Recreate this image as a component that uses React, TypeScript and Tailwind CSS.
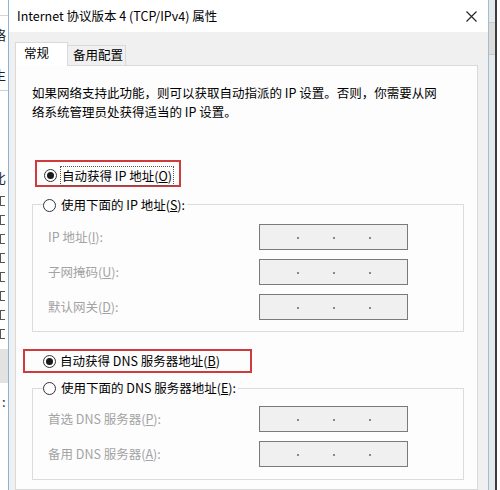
const font = "font-['Noto_Sans_CJK_SC','Noto_Sans',sans-serif]"

function Radio({ checked }: { checked?: boolean }) {
  return (
    <span className="flex h-[13px] w-[13px] shrink-0 items-center justify-center rounded-full border border-[#333] bg-white">
      {checked && <span className="h-[7px] w-[7px] rounded-full bg-[#1a1a1a]" />}
    </span>
  )
}

function IpBox() {
  return (
    <div className="flex h-[26px] w-[149px] items-center border border-[#7a7a7a] bg-[#f0f0f0] pl-[20px]">
      {[0, 1, 2].map((i) => (
        <span key={i} className="flex w-[36px] justify-center pt-[2px]">
          <span className="h-[2px] w-[2px] rounded-full bg-[#666]" />
        </span>
      ))}
    </div>
  )
}

function FieldRow({ label, hotkey }: { label: string; hotkey: string }) {
  return (
    <div className="flex h-[26px] items-center pl-[15px]">
      <span className="w-[211px] text-[#a3a3a3]">
        {label}(<span className="underline">{hotkey}</span>):
      </span>
      <IpBox />
    </div>
  )
}

function LeftWindow() {
  return (
    <div className="flex w-[8px] shrink-0 flex-col overflow-hidden bg-white text-[13px] text-[#222]">
      <div className="h-[16px] border-b border-[#d6d6d6]" />
      <div className="mt-[10px] -ml-[7px] leading-[18px]">络</div>
      <div className="mt-[22px] -ml-[7px] leading-[18px]">生</div>
      <div className="mt-[6px] h-px bg-[#cfcfcf]" />
      <div className="mt-[78px] -ml-[7px] leading-[18px]">比</div>
      {[0, 1, 2, 3, 4, 5, 6, 7].map((i) => (
        <div key={i} className="mt-[9px] h-[10px] w-[5px] border border-r-0 border-[#555]" />
      ))}
      <div className="mt-[10px] h-[34px] bg-[#e2e2e2]" />
      <div className="mt-[12px] pl-[2px] leading-[14px]">:</div>
    </div>
  )
}

export default function App() {
  return (
    <div className={`flex h-[490px] w-[500px] overflow-hidden bg-white text-black ${font}`}>
      <LeftWindow />

      <div className="flex w-[481px] shrink-0 flex-col border-x border-l-[#8fb3d6] border-r-[#a7bccb]">
        {/* title bar */}
        <div className="flex h-[32px] shrink-0 items-center justify-between bg-white pl-[8px] pr-[11px]">
          <span className="text-[12.5px] leading-none">Internet 协议版本 4 (TCP/IPv4) 属性</span>
          <svg width="11" height="11" viewBox="0 0 11 11" className="text-[#222]">
            <path d="M0.5 0.5 L10.5 10.5 M10.5 0.5 L0.5 10.5" stroke="currentColor" strokeWidth="1.1" />
          </svg>
        </div>

        {/* body */}
        <div className="flex flex-1 flex-col bg-[#f0f0f0] pl-[6px] pr-[10px] pt-[10px] text-[12.5px]">
          <div className="relative z-10 -mb-px flex h-[24px] items-end">
            <div className="flex h-[24px] w-[53px] items-center border-x border-t border-[#d9d9d9] bg-white pl-[8px] pb-[2px]">
              常规
            </div>
            <div className="mb-px flex h-[20px] w-[58px] items-center border-r border-t border-[#d9d9d9] pl-[5px]">
              备用配置
            </div>
          </div>

          <div className="flex flex-1 flex-col items-start border border-[#d9d9d9] bg-[#fdfdfd] pl-[16px] pt-[17px]">
            <p className="whitespace-nowrap leading-[19px]">
              如果网络支持此功能，则可以获取自动指派的 IP 设置。否则，你需要从网
              <br />
              络系统管理员处获得适当的 IP 设置。
            </p>

            <div className="ml-[3px] mt-[39px] flex h-[27px] w-[146px] items-center gap-[3px] border-2 border-[#cf3b3d] pl-[7px] pt-[4px]">
              <Radio checked />
              <span className="border border-dotted border-[#555] px-px leading-[18px]">
                自动获得 IP 地址(<span className="underline">O</span>)
              </span>
            </div>

            <div className="mt-[17px] flex w-[432px] flex-col border border-[#dcdcdc] pb-[11px]">
              <div className="-mt-[10px] ml-[10px] flex h-[20px] w-fit items-center gap-[5px] bg-[#fdfdfd] pr-[2px]">
                <Radio />
                <span>
                  使用下面的 IP 地址(<span className="underline">S</span>):
                </span>
              </div>
              <div className="mt-[9px] flex flex-col gap-[9px]">
                <FieldRow label="IP 地址" hotkey="I" />
                <FieldRow label="子网掩码" hotkey="U" />
                <FieldRow label="默认网关" hotkey="D" />
              </div>
            </div>

            <div className="-ml-[9px] mt-[17px] flex h-[24px] w-[229px] items-center gap-[4px] border-2 border-[#cf3b3d] pl-[18px]">
              <Radio checked />
              <span>
                自动获得 DNS 服务器地址(<span className="underline">B</span>)
              </span>
            </div>

            <div className="mt-[15px] flex w-[432px] flex-col border border-[#dcdcdc] pb-[12px]">
              <div className="-mt-[11px] ml-[10px] flex h-[20px] w-fit items-center gap-[5px] bg-[#fdfdfd] pr-[2px]">
                <Radio />
                <span>
                  使用下面的 DNS 服务器地址(<span className="underline">E</span>):
                </span>
              </div>
              <div className="mt-[8px] flex flex-col gap-[9px]">
                <FieldRow label="首选 DNS 服务器" hotkey="P" />
                <FieldRow label="备用 DNS 服务器" hotkey="A" />
              </div>
            </div>
          </div>
        </div>
      </div>

      {/* edge of the window behind */}
      <div className="flex w-[11px] shrink-0">
        <div className="flex w-[6px] flex-col bg-[#e4e9ee]">
          <div className="mt-[22px] h-[33px] border-y border-[#c9c9c9] bg-[#dcdcdc]" />
        </div>
        <div className="w-[2px] bg-[#3d3d3d]" />
        <div className="w-[3px] bg-white" />
      </div>
    </div>
  )
}
